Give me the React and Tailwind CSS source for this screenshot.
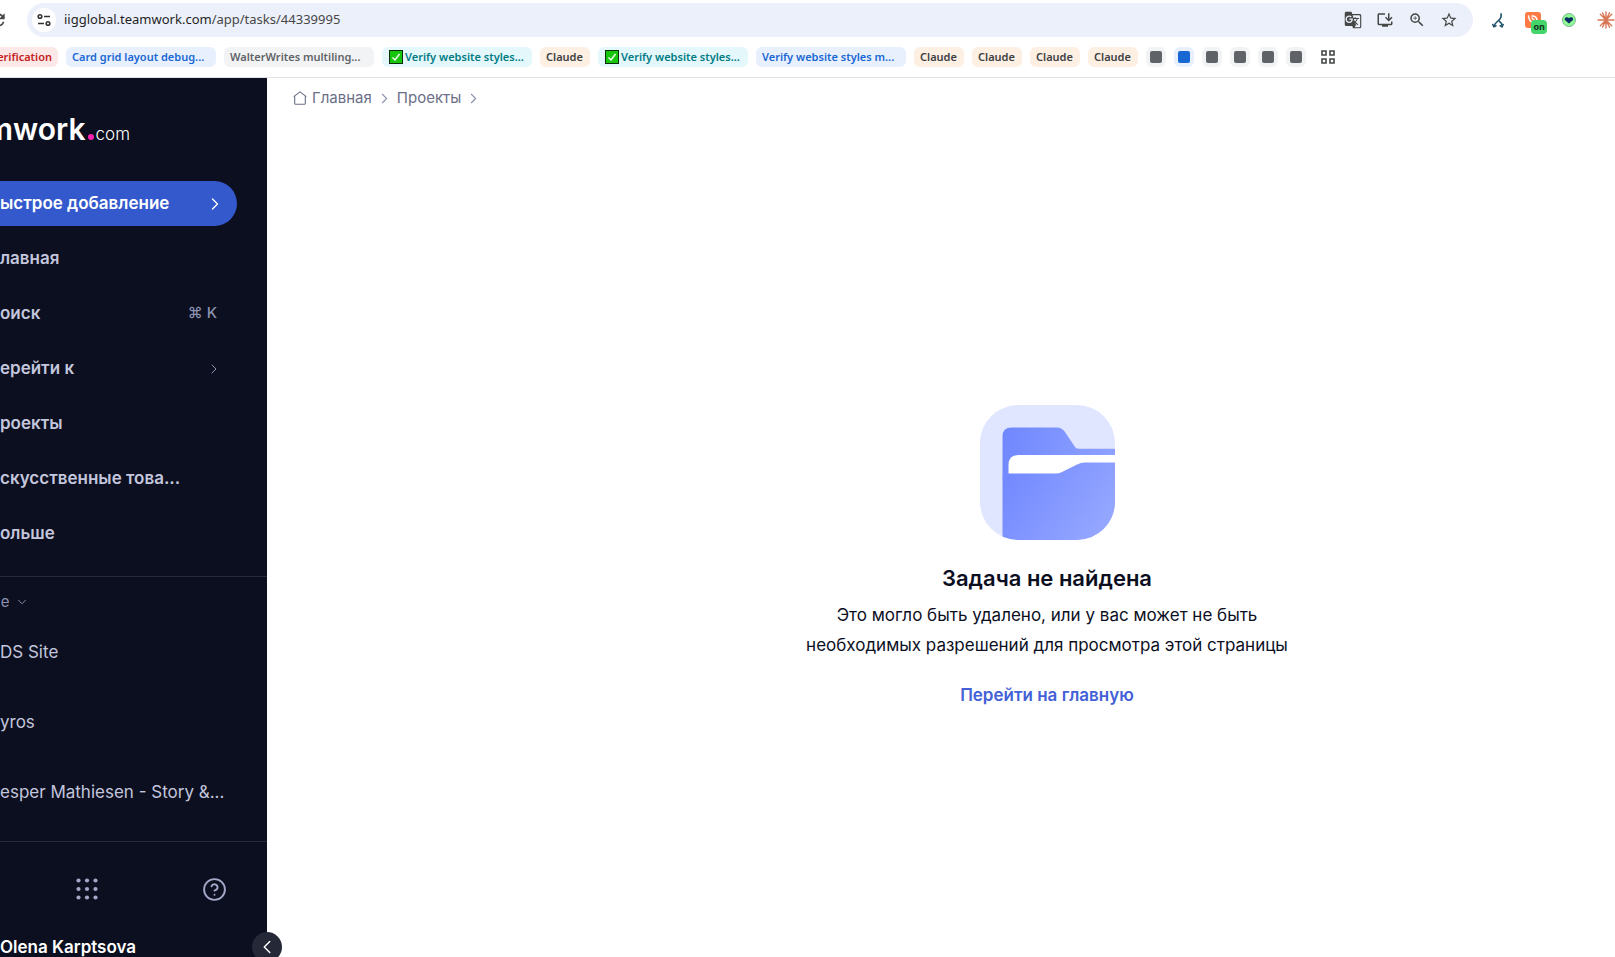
import { ChevronDown, ChevronLeft, ChevronRight, CircleHelp } from "lucide-react";
import { MdGTranslate, MdInstallDesktop, MdRefresh, MdStarOutline, MdZoomIn } from "react-icons/md";

const bookmarks = [
    { label: "erification", className: "w-[58px] bg-[#fce8e6] text-[#c5221f]", first: true },
    { label: "Card grid layout debug...", className: "w-[150px] bg-[#e8f0fe] text-[#1967d2]" },
    { label: "WalterWrites multiling...", className: "w-[150px] bg-[#f1f3f4] text-[#5f6368]" },
    { label: "Verify website styles...", className: "w-[150px] bg-[#e4f7fb] text-[#007b83]", check: true },
    { label: "Claude", className: "w-[50px] bg-[#feefe3] text-[#3c4043]" },
    { label: "Verify website styles...", className: "w-[150px] bg-[#e4f7fb] text-[#007b83]", check: true },
    { label: "Verify website styles m...", className: "w-[150px] bg-[#e8f0fe] text-[#1967d2]" },
    { label: "Claude", className: "w-[50px] bg-[#feefe3] text-[#3c4043]" },
    { label: "Claude", className: "w-[50px] bg-[#feefe3] text-[#3c4043]" },
    { label: "Claude", className: "w-[50px] bg-[#feefe3] text-[#3c4043]" },
    { label: "Claude", className: "w-[50px] bg-[#feefe3] text-[#3c4043]" },
];

const squares = ["gray", "blue", "gray", "gray", "gray", "gray"];

const navItems = [
    { label: "лавная" },
    { label: "оиск", shortcut: "⌘ K" },
    { label: "ерейти к", arrow: true },
    { label: "роекты" },
    { label: "скусственные това..." },
    { label: "ольше" },
];

const recentItems = ["DS Site", "yros", "esper Mathiesen - Story &..."];

function TuneIcon() {
    return (
        <svg width="14" height="14" viewBox="0 0 14 14" fill="none" stroke="#333" strokeWidth="1.6">
            <circle cx="3" cy="3.5" r="1.8" />
            <path d="M7 3.5h6M1 10.5h6" />
            <circle cx="11" cy="10.5" r="1.8" />
        </svg>
    );
}

function CheckEmoji() {
    return (
        <svg width="14" height="14" viewBox="0 0 14 14" className="shrink-0">
            <rect x="0.5" y="0.5" width="13" height="13" fill="#16c60c" stroke="#0c2b0a" />
            <path d="M3.5 7.5 6 10l4.5-6" fill="none" stroke="#fff" strokeWidth="1.4" />
        </svg>
    );
}

function BranchIcon() {
    return (
        <svg width="14" height="17" viewBox="0 0 14 17" fill="none" stroke="#1f4e68" strokeWidth="1.8">
            <path d="M10.500 0v3.500C10.500 8 4 9.500 2.500 14.500" />
            <path d="M8 9c2 1.500 3.500 3 3.500 5.500" />
            <path d="M.5 12.500l1.700 3.200 3-1.500M8.800 14.200l2.700 1.600 1.700-3.300" />
        </svg>
    );
}

function FeedIcon() {
    return (
        <svg width="16" height="16" viewBox="0 0 16 16">
            <rect width="16" height="16" rx="3" fill="#ff7a45" />
            <path d="M3.500 4C4 8 6 10 8 11M7 4c3 0 5 2 5 5" fill="none" stroke="#fff" strokeWidth="1.6" strokeLinecap="round" />
            <path d="M6.500 5.500 10 9" stroke="#fff" strokeWidth="1.2" />
        </svg>
    );
}

function HeartIcon() {
    return (
        <svg width="16" height="16" viewBox="0 0 16 16">
            <circle cx="8" cy="8" r="7.5" fill="#8efb94" stroke="#74a88e" />
            <path d="M8 12 3.600 8.300C1.800 6 5.300 3.300 8 5.800c2.700-2.500 6.200.2 4.400 2.500Z" fill="#0b2a66" />
        </svg>
    );
}

function BurstIcon() {
    return (
        <svg width="18" height="18" viewBox="0 0 18 18" stroke="#d97757" strokeWidth="1.4" strokeLinecap="round" className="shrink-0">
            <path d="M9 1v16M1 9h16M3.300 3.300l11.400 11.400M3.300 14.700 14.700 3.300M5.500 1.800l7 14.400M12.500 1.800l-7 14.400" />
        </svg>
    );
}

function BookmarkGridIcon() {
    return (
        <svg width="14" height="14" viewBox="0 0 14 14" fill="none" stroke="#444746" strokeWidth="1.6">
            <path d="M1 1h4v4H1zM9 1h4v4H9zM1 9h4v4H1zM9 9h4v4H9z" />
        </svg>
    );
}

function HouseIcon() {
    return (
        <svg width="14" height="14" viewBox="0 0 14 14" fill="none" stroke="#6b6f87" strokeWidth="1.1" strokeLinejoin="round">
            <path d="M.7 5.600 7 .9l6.300 4.700M1.700 5v7.500q0 .8.800.8h9q.8 0 .8-.8V5" />
        </svg>
    );
}

function DotsIcon() {
    return (
        <svg width="22" height="22" viewBox="0 0 22 22" fill="#a3a8c9">
            {[2.5, 11, 19.5].map((y) =>
                [2.5, 11, 19.5].map((x) => <circle key={`${x}-${y}`} cx={x} cy={y} r="2.1" />)
            )}
        </svg>
    );
}

function FolderArt() {
    return (
        <svg width="135" height="135" viewBox="0 0 135 135" aria-hidden="true">
            <defs>
                <clipPath id="tile">
                    <rect width="135" height="135" rx="38" />
                </clipPath>
                <linearGradient id="back" x1="22" y1="22" x2="135" y2="50" gradientUnits="userSpaceOnUse">
                    <stop stopColor="#6f87ff" />
                    <stop offset="1" stopColor="#8fa2ff" />
                </linearGradient>
                <linearGradient id="front" x1="22" y1="62" x2="125" y2="130" gradientUnits="userSpaceOnUse">
                    <stop stopColor="#7087ff" />
                    <stop offset="1" stopColor="#96a8ff" />
                </linearGradient>
            </defs>
            <g clipPath="url(#tile)">
                <rect width="135" height="135" fill="#e0e6ff" />
                <path d="M22.500 135V31.500q0-9 9-9H77q5 0 8 4.500l10 15q1.200 1.700 3.500 1.700H135v30H22.500Z" fill="url(#back)" />
                <path d="M28.500 72V60q0-10 10-10H135v14l-40 8Z" fill="#fff" />
                <path d="M22.500 135V74q0-5.500 6-5.500H76q3 0 6-1.500l15-7.500q4-2 8-2h30V135Z" fill="url(#front)" />
            </g>
        </svg>
    );
}

function BrowserBar() {
    return (
        <header className="shrink-0 overflow-hidden border-b border-[#dfe1e5] bg-white pt-[3px] pb-[10px] font-['Noto_Sans','Open_Sans',sans-serif]">
            <div className="flex items-center">
                <button aria-label="Обновить" className="mr-[19px] -ml-3 shrink-0 text-[#444746]">
                    <MdRefresh size={20} />
                </button>
                <div className="flex h-[34px] flex-1 items-center rounded-full bg-[#ecf0fa] pr-[15px] pl-[5px]">
                    <span className="flex size-6 items-center justify-center rounded-full bg-white">
                        <TuneIcon />
                    </span>
                    <div className="ml-2 flex-1 text-[13px] whitespace-nowrap text-[#1f1f1f]">
                        iigglobal.teamwork.com<span className="text-[#474747]">/app/tasks/44339995</span>
                    </div>
                    <div className="flex items-center gap-[14px] text-[#444746]">
                        <MdGTranslate size={18} />
                        <MdInstallDesktop size={18} />
                        <MdZoomIn size={18} />
                        <MdStarOutline size={18} />
                    </div>
                </div>
                <div className="flex w-[142px] shrink-0 items-center gap-[21px] pl-[19px]">
                    <BranchIcon />
                    <div className="relative">
                        <FeedIcon />
                        <span className="absolute top-2 left-[6px] flex h-[14px] w-4 items-center justify-center rounded-[4px] bg-[#43d46b] text-[9px] font-bold text-[#12331c]">
                            on
                        </span>
                    </div>
                    <HeartIcon />
                    <BurstIcon />
                </div>
            </div>
            <div className="mt-[10px] flex h-5 items-center gap-2 text-[11px] font-semibold whitespace-nowrap">
                {bookmarks.map((item, index) => (
                    <a
                        key={index}
                        href="#"
                        className={`flex h-5 shrink-0 items-center gap-[2px] ${item.className} ${
                            item.first ? "justify-end rounded-r-[6px] pr-[6px]" : item.check ? "rounded-[6px] pl-[7px]" : "rounded-[6px] pl-[6px]"
                        }`}
                    >
                        {item.check && <CheckEmoji />}
                        <span>{item.label}</span>
                    </a>
                ))}
                {squares.map((color, index) => (
                    <a
                        key={index}
                        href="#"
                        aria-label="Группа вкладок"
                        className={`flex size-5 shrink-0 items-center justify-center rounded-[6px] ${color === "blue" ? "bg-[#e8f0fe]" : "bg-[#f1f3f4]"}`}
                    >
                        <span className={`h-3 w-3 rounded-[2px] ${color === "blue" ? "bg-[#1967d2]" : "bg-[#5f6368]"}`} />
                    </a>
                ))}
                <button aria-label="Все группы" className="ml-[7px]">
                    <BookmarkGridIcon />
                </button>
            </div>
        </header>
    );
}

function Sidebar() {
    return (
        <aside className="relative w-[267px] shrink-0 bg-[#0c0f1f] text-[17px] text-[#c3c6dd]">
            <div className="overflow-hidden pt-[29px]">
                <div className="flex h-[45px] w-[130px] items-center justify-end text-white">
                    <div className="flex items-baseline">
                        <span className="text-[30px] font-semibold">mwork</span>
                        <span className="mx-[2px] size-[6px] rounded-full bg-[#ff22b1]" />
                        <span className="text-[17px] font-light">com</span>
                    </div>
                </div>
                <button className="mt-[29px] flex h-[45px] w-[237px] items-center justify-between rounded-r-full bg-[#3359cd] pr-3 font-semibold text-white">
                    ыстрое добавление
                    <ChevronRight size={20} strokeWidth={1.6} />
                </button>
                <nav className="mt-[5px]">
                    {navItems.map((item) => (
                        <a key={item.label} href="#" className="flex h-[55px] items-center justify-between pr-[50px] font-semibold whitespace-nowrap">
                            {item.label}
                            {item.shortcut && <span className="text-[15px] font-medium text-[#8d92b0]">{item.shortcut}</span>}
                            {item.arrow && <ChevronRight size={16} strokeWidth={1.5} className="-mr-[5px] text-[#8d92b0]" />}
                        </a>
                    ))}
                </nav>
                <div className="mt-[15px] border-t border-[#282b3b] pt-[14px]">
                    <button className="flex h-[22px] items-center gap-[5px] text-[15px] text-[#8d92b0]">
                        <span className="w-[10px]">е</span>
                        <ChevronDown size={14} strokeWidth={1.6} />
                    </button>
                    <div className="mt-[5px]">
                        {recentItems.map((item) => (
                            <a key={item} href="#" className="flex h-[70px] items-center whitespace-nowrap">
                                {item}
                            </a>
                        ))}
                    </div>
                </div>
                <div className="mt-[13px] border-t border-[#282b3b] pt-[25px]">
                    <div className="flex h-11 items-center justify-between pr-10 pl-[76px] text-[#a3a8c9]">
                        <button aria-label="Приложения">
                            <DotsIcon />
                        </button>
                        <button aria-label="Помощь">
                            <CircleHelp size={25} strokeWidth={1.8} />
                        </button>
                    </div>
                    <div className="mt-[22px] leading-7 font-semibold whitespace-nowrap text-white">Olena Karptsova</div>
                </div>
            </div>
            <button
                aria-label="Свернуть"
                className="absolute top-[854px] -right-[15px] flex size-[30px] items-center justify-center rounded-full bg-[#252836] text-white"
            >
                <ChevronLeft size={22} strokeWidth={1.6} />
            </button>
        </aside>
    );
}

function NotFound() {
    return (
        <main className="flex flex-1 flex-col">
            <nav className="flex h-10 items-center gap-1 pl-[26px] text-[15px] text-[#6b6f87]">
                <a href="#" className="flex items-center gap-[5px]">
                    <HouseIcon />
                    Главная
                </a>
                <ChevronRight size={17} strokeWidth={1.5} className="text-[#8d92b0]" />
                <a href="#">Проекты</a>
                <ChevronRight size={17} strokeWidth={1.5} className="text-[#8d92b0]" />
            </nav>
            <div className="flex flex-1 flex-col items-center justify-center pt-[39px] pl-[212px] text-center text-[17px] text-[#0c0f1f]">
                <FolderArt />
                <h1 className="mt-[22px] text-[22px] leading-8 font-semibold">Задача не найдена</h1>
                <p className="mt-[6px] leading-[30px]">
                    Это могло быть удалено, или у вас может не быть
                    <br />
                    необходимых разрешений для просмотра этой страницы
                </p>
                <a href="#" className="mt-[21px] leading-7 font-semibold text-[#4461d7]">
                    Перейти на главную
                </a>
            </div>
        </main>
    );
}

export default function App() {
    return (
        <div className="flex h-screen flex-col overflow-hidden bg-white font-['Inter',sans-serif]">
            <BrowserBar />
            <div className="flex min-h-0 flex-1">
                <Sidebar />
                <NotFound />
            </div>
        </div>
    );
}
